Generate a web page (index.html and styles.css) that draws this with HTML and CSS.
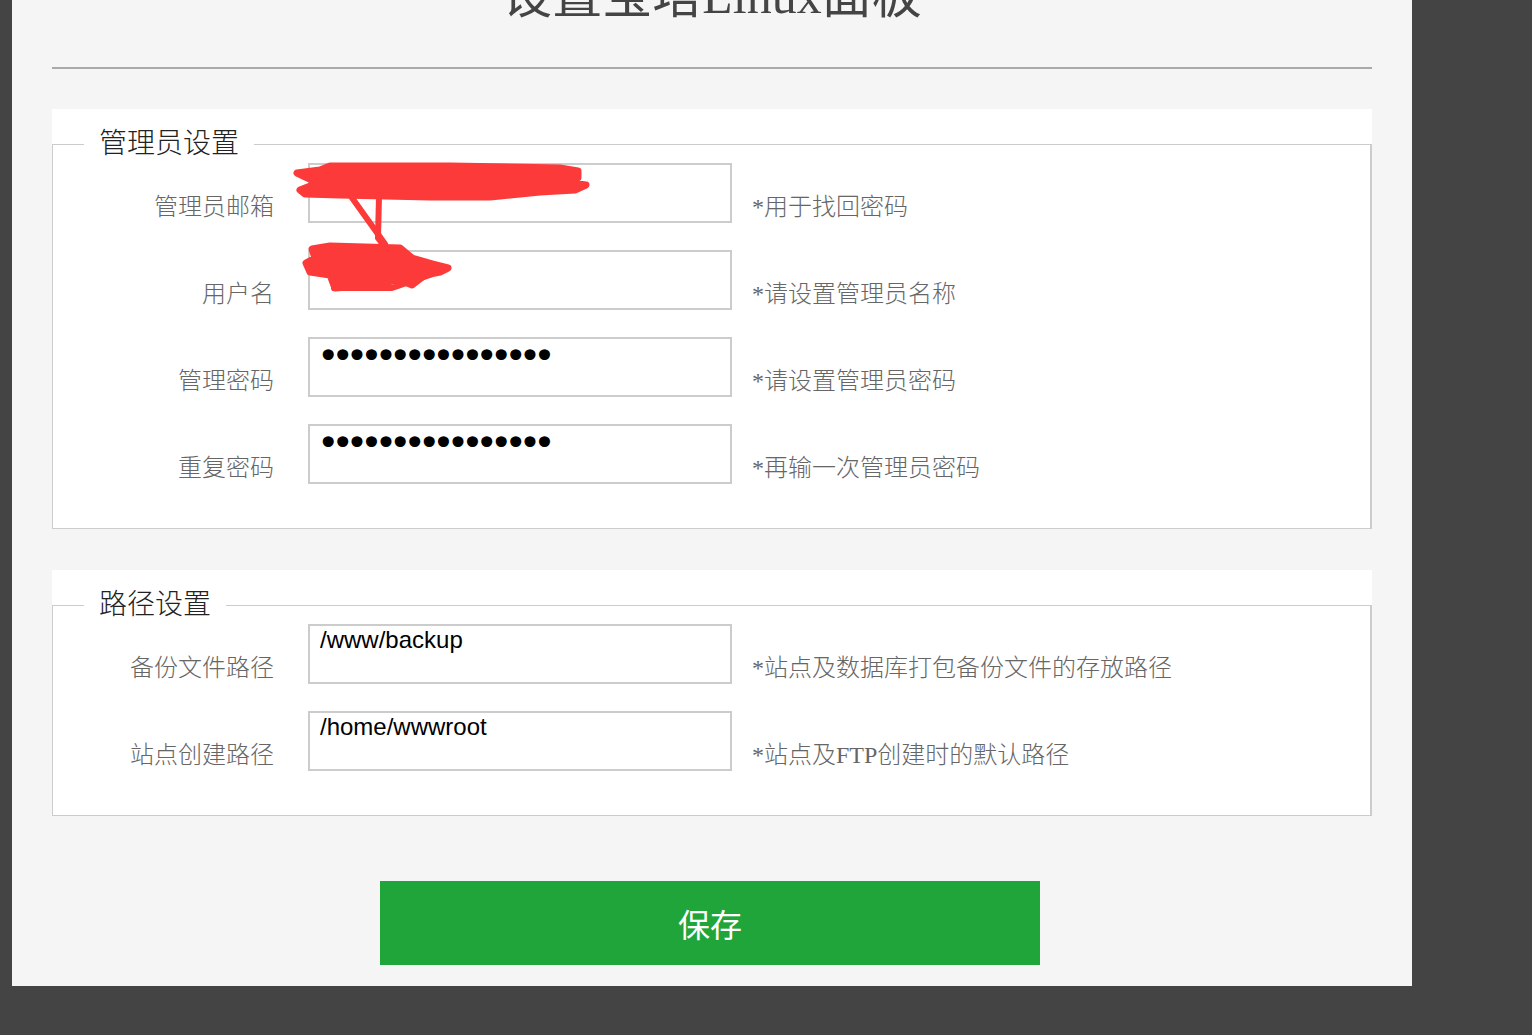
FILE: index.html
```html
<!DOCTYPE html>
<html lang="zh-CN">
<head>
  <meta charset="UTF-8" />
  <meta name="viewport" content="width=device-width, initial-scale=1.0"/>
  <title>设置宝塔Linux面板</title>
  <link rel="stylesheet" href="styles.css">
</head>
<body>
  <div class="panel">
    <h1 class="title">设置宝塔Linux面板</h1>

    <div class="section">
      <fieldset>
        <legend>管理员设置</legend>
        <div class="row">
          <label class="label">管理员邮箱</label>
          <input class="field" type="text" value="">
          <span class="hint">*用于找回密码</span>
        </div>
        <div class="row">
          <label class="label">用户名</label>
          <input class="field" type="text" value="">
          <span class="hint">*请设置管理员名称</span>
        </div>
        <div class="row">
          <label class="label">管理密码</label>
          <input class="field pwd" type="password" value="abcdefghijklmnop">
          <span class="hint">*请设置管理员密码</span>
        </div>
        <div class="row">
          <label class="label">重复密码</label>
          <input class="field pwd" type="password" value="abcdefghijklmnop">
          <span class="hint">*再输一次管理员密码</span>
        </div>
      </fieldset>

      <!-- redaction marks over the account fields -->
      <svg class="scribble" viewBox="293 160 300 135" width="300" height="135">
        <g fill="#fc3a3a" stroke="#fc3a3a" stroke-width="7" stroke-linejoin="round" stroke-linecap="round">
          <polygon points="330,166 450,166 560,168 578,171 578,178 565,182 586,185 575,190 540,192 490,197 430,197 340,195 305,194 300,190 318,183 297,173 320,170"/>
          <polygon points="312,249 330,246 400,248 412,258 433,264 448,268 440,272 425,275 412,285 400,280 360,286 335,288 330,275 310,272 306,263 315,258"/>
        </g>
        <g fill="none" stroke="#fc3a3a" stroke-width="6" stroke-linecap="round" stroke-linejoin="round">
          <path d="M350 195 L385 244"/>
          <path d="M379 196 L378 238 L384 246"/>
          <path d="M333 270 L334 288 L392 288 L430 275"/>
        </g>
      </svg>
    </div>

    <div class="section section-path">
      <fieldset>
        <legend>路径设置</legend>
        <div class="row">
          <label class="label">备份文件路径</label>
          <input class="field" type="text" value="/www/backup">
          <span class="hint">*站点及数据库打包备份文件的存放路径</span>
        </div>
        <div class="row">
          <label class="label">站点创建路径</label>
          <input class="field" type="text" value="/home/wwwroot">
          <span class="hint">*站点及FTP创建时的默认路径</span>
        </div>
      </fieldset>
    </div>

    <button class="save" type="button">保存</button>
  </div>
</body>
</html>
```

FILE: styles.css
```css
* {
  box-sizing: border-box;
}

body {
  margin: 0;
  background: #444;
  font-family: "Liberation Serif", "Noto Sans CJK SC", serif;
}

.panel {
  width: 1400px;
  margin: -34px 0 0 12px;
  padding: 0 40px 21px;
  background: #f5f5f5;
}

.title {
  margin: 0;
  padding-bottom: 41px;
  border-bottom: 2px solid #aaa;
  font-size: 50px;
  line-height: 60px;
  font-weight: normal;
  text-align: center;
  color: #444;
}

.section {
  position: relative;
  margin-top: 40px;
  padding-top: 17px;
  background: #fff;
}

.section-path {
  margin-top: 41px;
}

fieldset {
  margin: 0;
  padding: 1px 31px 44px;
  border: 1px solid #ccc;
  border-right-width: 2px;
}

legend {
  padding: 0 15px;
  font-size: 28px;
  line-height: 36px;
  font-weight: 300;
  color: #222;
}

.row {
  display: flex;
  align-items: flex-end;
}

.row + .row {
  margin-top: 27px;
}

.label {
  width: 190px;
  margin: 0 34px 2px 0;
  font-size: 24px;
  line-height: 28px;
  font-weight: 300;
  text-align: right;
  color: #666;
}

.field {
  width: 424px;
  height: 60px;
  padding: 0 10px 28px;
  border: 2px solid #ccc;
  background: #fff;
  font-family: "Liberation Sans", Arial, sans-serif;
  font-size: 24px;
  color: #000;
  outline: none;
}

.pwd {
  font-family: "DejaVu Sans", sans-serif;
  font-size: 38px;
  line-height: 29px;
  letter-spacing: -8px;
  padding: 2px 0 25px 7px;
}

.hint {
  margin: 0 0 2px 20px;
  font-size: 24px;
  line-height: 28px;
  font-weight: 300;
  color: #666;
}

.scribble {
  position: absolute;
  left: 241px;
  top: 51px;
}

.save {
  display: block;
  width: 660px;
  height: 84px;
  margin: 65px 0 0 328px;
  border: none;
  background: #20a53a;
  color: #fff;
  font-family: "Noto Sans CJK SC", sans-serif;
  font-size: 32px;
  cursor: pointer;
}
```
